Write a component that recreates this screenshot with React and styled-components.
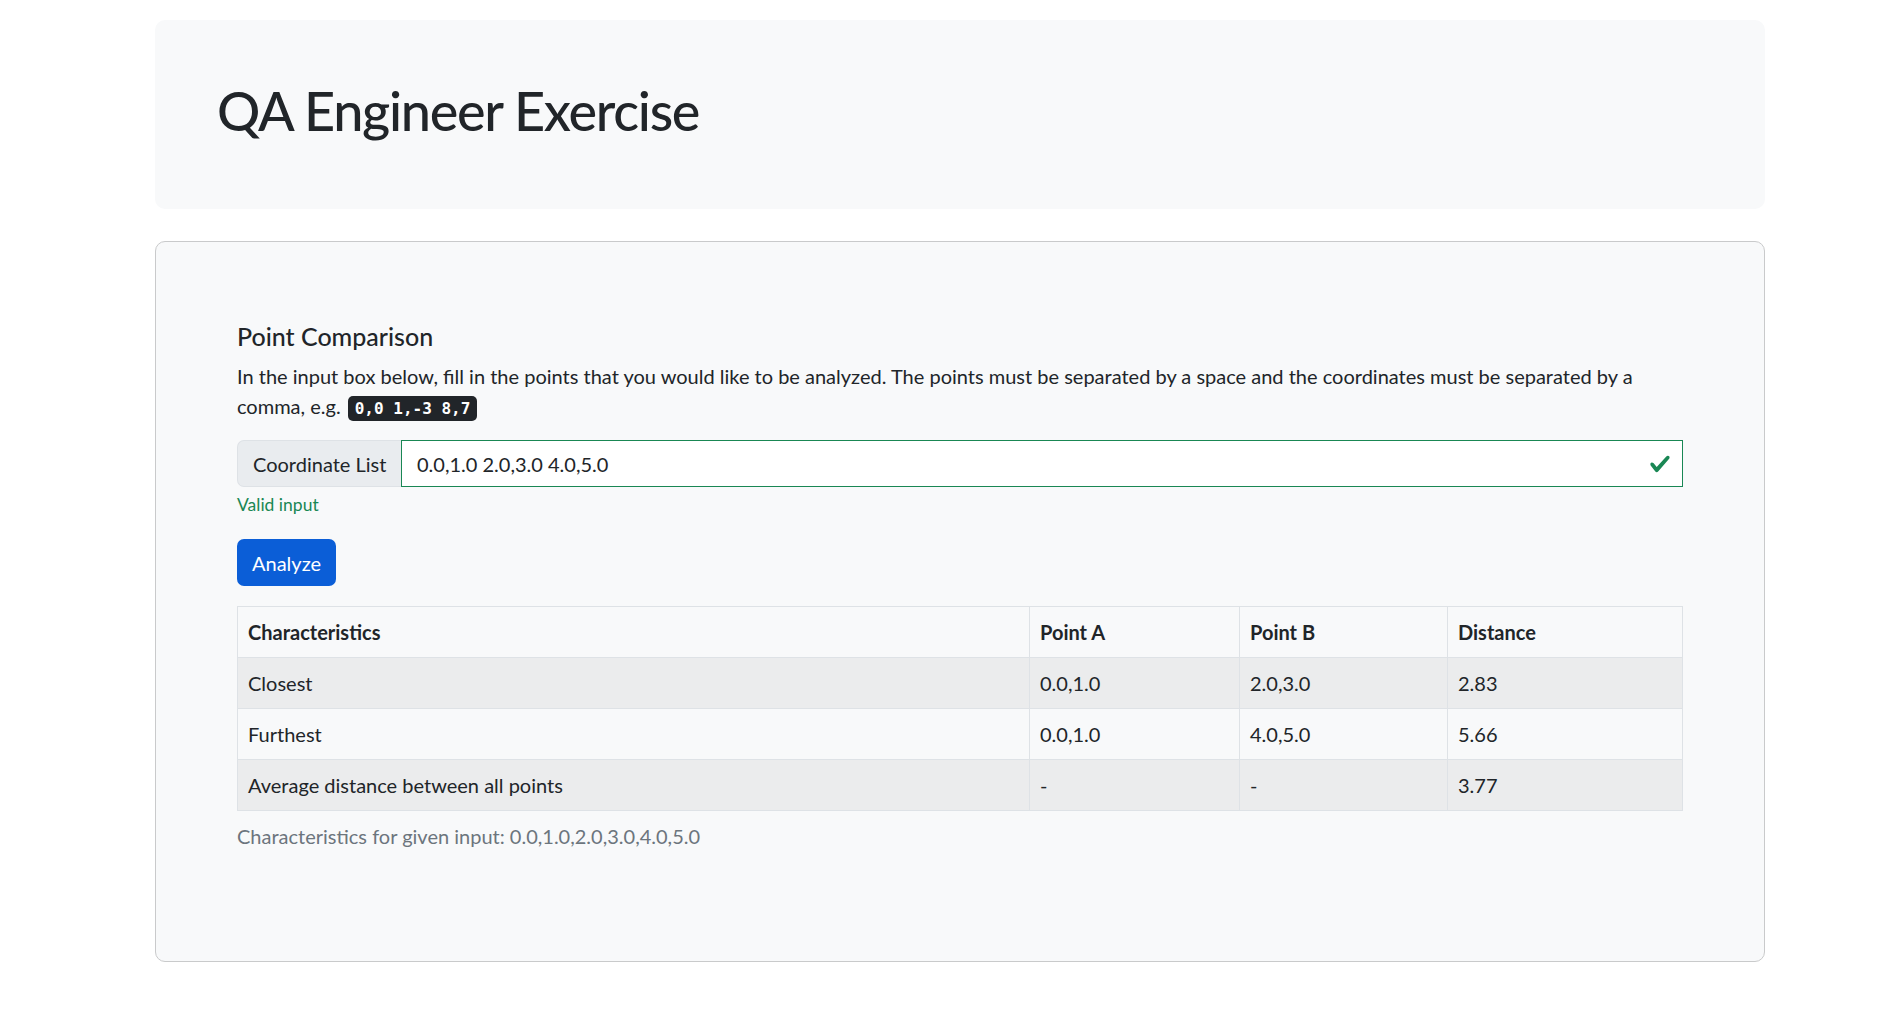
import React from "react";
import styled, { createGlobalStyle } from "styled-components";

const GlobalStyle = createGlobalStyle`
  body {
    margin: 0;
    background: #ffffff;
    color: #212529;
    font-family: "Segoe UI", Lato, "Open Sans", sans-serif;
    font-size: 20px;
    line-height: 1.5;
  }
`;

const rows = [
  { label: "Closest", a: "0.0,1.0", b: "2.0,3.0", dist: "2.83" },
  { label: "Furthest", a: "0.0,1.0", b: "4.0,5.0", dist: "5.66" },
  { label: "Average distance between all points", a: "-", b: "-", dist: "3.77" },
];

const App = () => {
  return (
    <>
      <GlobalStyle />
      <Container>
        <Hero>
          <Title>QA Engineer Exercise</Title>
        </Hero>
        <Card>
          <Heading>Point Comparison</Heading>
          <Intro>
            In the input box below, fill in the points that you would like to be
            analyzed. The points must be separated by a space and the coordinates
            must be separated by a comma, e.g. <Kbd>0,0 1,-3 8,7</Kbd>
          </Intro>
          <InputGroup>
            <Addon>Coordinate List</Addon>
            <Field>
              <FieldText>0.0,1.0 2.0,3.0 4.0,5.0</FieldText>
              <ValidIcon viewBox="0 0 8 8">
                <path
                  fill="#198754"
                  d="M2.3 6.73.6 4.53c-.4-1.04.46-1.4 1.1-.8l1.1 1.4 3.4-3.8c.6-.63 1.6-.27 1.2.7l-4 4.6c-.43.5-.8.4-1.1.1z"
                />
              </ValidIcon>
            </Field>
          </InputGroup>
          <Feedback>Valid input</Feedback>
          <Button>Analyze</Button>
          <Table>
            <colgroup>
              <col style={{ width: "792px" }} />
              <col style={{ width: "210px" }} />
              <col style={{ width: "208px" }} />
              <col />
            </colgroup>
            <thead>
              <tr>
                <Th>Characteristics</Th>
                <Th>Point A</Th>
                <Th>Point B</Th>
                <Th>Distance</Th>
              </tr>
            </thead>
            <tbody>
              {rows.map((r, i) => (
                <Row key={r.label} $striped={i % 2 === 0}>
                  <Td>{r.label}</Td>
                  <Td>{r.a}</Td>
                  <Td>{r.b}</Td>
                  <Td>{r.dist}</Td>
                </Row>
              ))}
            </tbody>
            <Caption>Characteristics for given input: 0.0,1.0,2.0,3.0,4.0,5.0</Caption>
          </Table>
        </Card>
      </Container>
    </>
  );
};

export default App;

const Container = styled.div`
  width: 1610px;
  margin-left: 155px;
  padding-top: 20px;
  padding-bottom: 40px;
`;

const Hero = styled.div`
  background: #f8f9fa;
  border-radius: 10px;
  padding: 56px 62px 64px;
  margin-bottom: 32px;
`;

const Title = styled.h1`
  margin: 0;
  font-size: 54px;
  font-weight: 500;
  line-height: 69px;
  letter-spacing: -1.3px;
  color: #212529;
`;

const Card = styled.div`
  background: #f8f9fa;
  border: 1px solid #c9cacb;
  border-radius: 10px;
  padding: 79px 81px 100px;
`;

const Heading = styled.h5`
  margin: 0 0 10px;
  font-size: 25px;
  font-weight: 500;
  line-height: 30px;
`;

const Intro = styled.p`
  margin: 0 0 19px;
  font-size: 20px;
  line-height: 30px;
`;

const Kbd = styled.kbd`
  display: inline-block;
  margin-left: 2px;
  background: #212529;
  color: #ffffff;
  border-radius: 5px;
  padding: 4px 7px;
  font-family: "DejaVu Sans Mono", "Liberation Mono", monospace;
  font-size: 16px;
  font-weight: 700;
  line-height: 17px;
`;

const InputGroup = styled.div`
  display: flex;
  height: 47px;
`;

const Addon = styled.div`
  display: flex;
  align-items: center;
  width: 164px;
  box-sizing: border-box;
  padding: 0 15px;
  background: #e9ecef;
  border: 1px solid #dee2e6;
  border-right: none;
  border-radius: 7px 0 0 7px;
  white-space: nowrap;
`;

const Field = styled.div`
  position: relative;
  flex: 1;
  display: flex;
  align-items: center;
  padding: 0 15px;
  background: #ffffff;
  border: 1px solid #198754;
`;

const FieldText = styled.span`
  color: #212529;
`;

const ValidIcon = styled.svg`
  position: absolute;
  right: 11px;
  top: 50%;
  width: 22px;
  height: 22px;
  transform: translateY(-50%);
`;

const Feedback = styled.div`
  margin-top: 5px;
  color: #198754;
  font-size: 17.5px;
  line-height: 26px;
`;

const Button = styled.button`
  display: block;
  margin-top: 21px;
  height: 47px;
  padding: 0 15px;
  background: #0b5ed7;
  color: #ffffff;
  border: none;
  border-radius: 7px;
  font-family: inherit;
  font-size: 20px;
`;

const Table = styled.table`
  width: 100%;
  margin-top: 20px;
  border-collapse: collapse;
  table-layout: fixed;
  caption-side: bottom;
`;

const Th = styled.th`
  padding: 10px;
  border: 1px solid #dee2e6;
  text-align: left;
  font-weight: 700;
  line-height: 30px;
`;

const Row = styled.tr`
  background: ${(p) => (p.$striped ? "#ebeced" : "transparent")};
`;

const Td = styled.td`
  padding: 10px;
  border: 1px solid #dee2e6;
  line-height: 30px;
`;

const Caption = styled.caption`
  padding: 10px 0;
  color: #6c757d;
  text-align: left;
  line-height: 30px;
`;
